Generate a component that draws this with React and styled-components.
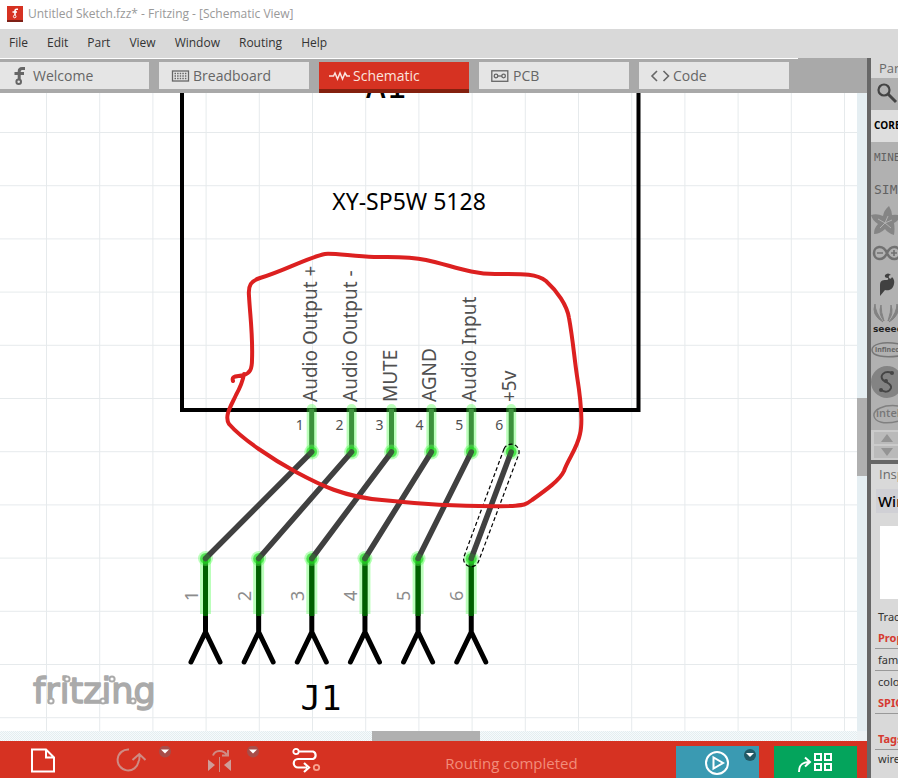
import React, { useState } from "react";
import styled, { createGlobalStyle } from "styled-components";

const GlobalStyle = createGlobalStyle`
  * {
    box-sizing: border-box;
  }
  body {
    margin: 0;
    font-family: "Noto Sans", "Open Sans", sans-serif;
    color: #333;
  }
  button {
    border: 0;
    padding: 0;
    background: none;
    font: inherit;
    color: inherit;
  }
`;

const Window = styled.div`
  display: flex;
  flex-direction: column;
  height: 100vh;
  overflow: hidden;
  background: #fff;
`;

const TitleBar = styled.header`
  flex: none;
  display: flex;
  align-items: center;
  gap: 5px;
  height: 29px;
  padding: 0 0 2px 7px;
  font-family: "Open Sans", sans-serif;
  font-size: 12px;
  color: #999;
  svg {
    display: block;
  }
`;

const MenuBar = styled.nav`
  flex: none;
  display: flex;
  gap: 19px;
  height: 29px;
  padding: 0 0 2px 9px;
  background: #d9d9d9;
  font-family: "Open Sans", sans-serif;
  font-size: 12px;
  color: #333;
`;

const Body = styled.div`
  flex: 1;
  display: flex;
  min-height: 0;
`;

const Main = styled.main`
  flex: 1;
  display: flex;
  flex-direction: column;
  min-width: 0;
`;

const TabBar = styled.div`
  flex: none;
  height: 35px;
  background: #a9a9a9;
`;

const TabLine = styled.div`
  width: 92%;
  height: 1px;
  margin-bottom: 3px;
  background: #fff;
`;

const Tabs = styled.div`
  display: flex;
  gap: 10px;
  margin-left: -1px;
`;

const Tab = styled.button`
  flex: 0 0 150px;
  display: flex;
  align-items: center;
  gap: 3px;
  height: ${(props) => (props.$active ? "31px" : "27px")};
  padding-left: 10px;
  border-bottom: ${(props) => (props.$active ? "4px solid #84200f" : "0")};
  background: ${(props) => (props.$active ? "#d63222" : "#e5e5e5")};
  color: ${(props) => (props.$active ? "#fbe3df" : "#666")};
  font-family: "Open Sans", sans-serif;
  font-size: 14px;
`;

const View = styled.div`
  flex: 1;
  display: grid;
  grid-template-columns: 1fr 10px;
  grid-template-rows: 1fr 10px;
  min-height: 0;
  background: #edf2f4;
`;

const Sheet = styled.svg`
  display: block;
  width: 100%;
  height: 100%;
  min-height: 0;
  overflow: hidden;
  background: #fff;
  font-family: "Noto Sans", sans-serif;
`;

const VerticalTrack = styled.div`
  display: grid;
  grid-template-rows: 305fr 78fr 255fr;
  background: #e5eef2;
`;

const HorizontalTrack = styled.div`
  display: grid;
  grid-template-columns: 372fr 108fr 377fr;
  background: repeating-conic-gradient(#e3eef1 0 25%, #f8fafb 0 50%) 0 0 / 2px 2px;
`;

const Thumb = styled.div`
  grid-area: ${(props) => (props.$vertical ? "2 / 1" : "1 / 2")};
  background: #b0b0b0;
`;

const Toolbar = styled.footer`
  flex: none;
  display: flex;
  align-items: flex-start;
  height: 37px;
  padding: 5px 10px 0 28px;
  background: #d63222;
  color: #fff;
`;

const Tool = styled.button`
  display: flex;
  flex: none;
  width: ${(props) => props.$width}px;
  svg {
    display: block;
  }
`;

const Status = styled.div`
  flex: 1;
  padding-top: 5px;
  padding-right: 3px;
  text-align: center;
  line-height: 24px;
  font-family: "Open Sans", sans-serif;
  font-size: 15px;
  color: #f28d7b;
`;

const Action = styled.button`
  flex: 0 0 83px;
  height: 32px;
  margin-left: ${(props) => props.$gap || 0}px;
  background: ${(props) => props.$color};
  color: #fff;
  svg {
    display: block;
  }
`;

const Dock = styled.aside`
  flex: 0 0 31px;
  display: flex;
  flex-direction: column;
  overflow: hidden;
  border-left: 4px solid #676767;
  background: #d9d9d9;
  white-space: nowrap;
`;

const DockTitle = styled.h2`
  flex: none;
  margin: 0;
  padding-left: 8px;
  line-height: 20px;
  font-family: "Open Sans", sans-serif;
  font-size: 13px;
  font-weight: 400;
  color: #6a6a6a;
`;

const Bins = styled.div`
  flex: none;
  display: flex;
  flex-direction: column;
  background: #b1b1b1;
`;

const Bin = styled.button`
  display: flex;
  align-items: center;
  height: 32px;
  padding-left: ${(props) => (props.$text ? "3px" : "0")};
  padding-bottom: ${(props) => (props.$text ? "2px" : "0")};
  background: ${(props) => (props.$active ? "#dedede" : "transparent")};
  color: ${(props) => (props.$active ? "#000" : "#626262")};
  font-family: ${(props) => props.$font || '"Open Sans", sans-serif'};
  font-size: ${(props) => props.$size || 11}px;
  font-weight: ${(props) => (props.$active ? 700 : 400)};
  svg {
    display: block;
    flex: none;
  }
`;

const BinScroll = styled.div`
  display: grid;
  gap: 2px;
  padding: 2px 0 2px 3px;
  background: #cbcbcb;
`;

const ScrollButton = styled.button`
  display: flex;
  height: 12px;
  padding-left: 4px;
  background: #bababa;
  svg {
    display: block;
    flex: none;
  }
`;

const Inspector = styled.section`
  flex: 1;
  display: flex;
  flex-direction: column;
  border-top: 4px solid #676767;
`;

const PartName = styled.div`
  margin: 5px 0 13px 5px;
  padding-left: 2px;
  background: #d0d0d5;
  line-height: 24px;
  font-size: 15px;
  font-weight: 500;
  color: #000;
`;

const Preview = styled.div`
  flex: none;
  height: 73px;
  margin: 0 0 8px 9px;
  background: #fff;
`;

const Info = styled.div`
  padding-left: 7px;
  line-height: 20px;
  font-size: 11px;
  color: #333;
`;

const Row = styled.div`
  margin-left: 4px;
  padding-left: 3px;
  border-bottom: ${(props) => (props.$line ? "1px solid #999" : "0")};
  line-height: ${(props) => props.$height || 21}px;
  font-size: 11px;
  color: #333;
`;

const Heading = styled(Row)`
  margin-top: ${(props) => props.$space || 0}px;
  font-weight: 700;
  color: #d63a30;
`;

const TabIcon = ({ children }) => (
  <svg width="21" height="20" viewBox="0 0 21 20" fill="none" stroke="currentColor" strokeWidth="1.3">
    {children}
  </svg>
);

const tabs = [
  {
    name: "Welcome",
    icon: (
      <g strokeWidth="3">
        <path d="M16 2.5H13C11 2.5 10.2 3.5 10.2 5.5V13M5.5 7.5H15" />
        <circle cx="9.7" cy="15.7" r="2.3" strokeWidth="2" />
      </g>
    ),
  },
  {
    name: "Breadboard",
    icon: (
      <g>
        <rect x="3.5" y="5" width="16" height="10" />
        <path d="M5.5 7.5h12M5.5 10h12M5.5 12.5h12" strokeDasharray="1.5 1.1" strokeWidth="1.5" />
      </g>
    ),
  },
  {
    name: "Schematic",
    icon: <path d="M0 10h4.5l1.5-3 2.5 6 2.5-6 2.5 6 2.5-6 1.8 3H21" strokeWidth="1.5" />,
  },
  {
    name: "PCB",
    icon: (
      <g>
        <rect x="2.8" y="4.8" width="16" height="10.5" />
        <circle cx="7" cy="10" r="1.8" />
        <circle cx="14.6" cy="10" r="1.8" />
        <path d="M9 10h4" />
      </g>
    ),
  },
  {
    name: "Code",
    icon: <path d="M8 5L3 10l5 5M14.5 5l5 5-5 5" strokeWidth="1.6" />,
  },
];

const GRID = 53.2;
const PIN_Y = 452;
const WIRE_Y = 558.5;

const pins = ["Audio Output +", "Audio Output -", "MUTE", "AGND", "Audio Input", "+5v"].map(
  (label, i) => ({ label, top: 311.7 + i * 39.9, bottom: 205.5 + i * 53.15 })
);

const Node = ({ x, y }) => (
  <g>
    <circle cx={x} cy={y} r="7.5" fill="#5f5" fillOpacity="0.4" />
    <circle cx={x} cy={y} r="5.5" fill="#20e020" fillOpacity="0.5" />
  </g>
);

const Connector = ({ pin, number }) => (
  <g>
    <path
      d={`M${pin.bottom} ${WIRE_Y}V632l-14.5 30M${pin.bottom} 632l14.5 30`}
      stroke="#000"
      strokeWidth="5"
      strokeLinecap="round"
      strokeLinejoin="round"
      fill="none"
    />
    <path d={`M${pin.top} 409V${PIN_Y}`} stroke="#4dff4d" strokeOpacity="0.38" strokeWidth="10" strokeLinecap="round" />
    <path d={`M${pin.top} 409V${PIN_Y}`} stroke="#3c913c" strokeWidth="5" />
    <path d={`M${pin.bottom} ${WIRE_Y}V614`} stroke="#4dff4d" strokeOpacity="0.38" strokeWidth="11" />
    <path d={`M${pin.bottom} ${WIRE_Y}V616`} stroke="#006000" strokeWidth="5" />
    <Node x={pin.top} y={PIN_Y} />
    <Node x={pin.bottom} y={WIRE_Y} />
    <path
      d={`M${pin.top} ${PIN_Y}L${pin.bottom} ${WIRE_Y}`}
      stroke="#404040"
      strokeWidth="5.5"
      strokeLinecap="round"
    />
    <circle cx={pin.top} cy={PIN_Y} r="5" fill="#18c818" fillOpacity="0.2" />
    <circle cx={pin.bottom} cy={WIRE_Y} r="5" fill="#18c818" fillOpacity="0.25" />
    <text transform={`translate(${pin.top + 5} 402) rotate(-90)`} fontSize="19" fill="#505050">
      {pin.label}
    </text>
    <text x={pin.top - 16} y="430" fontSize="14" fill="#505050">
      {number}
    </text>
    <text transform={`translate(${pin.bottom - 8} 601) rotate(-90)`} fontSize="18" fill="#8c8c8c">
      {number}
    </text>
  </g>
);

const Wordmark = () => (
  <g stroke="#aaa" strokeWidth="1.5" strokeLinejoin="round" fill="#aaa">
    <text x="33" y="703" fontFamily="DejaVu Sans" fontSize="35">
      fritzing
    </text>
    <g fill="#fff" strokeWidth="2">
      <circle cx="51" cy="701" r="2.6" />
      <circle cx="67" cy="679" r="2.6" />
      <circle cx="103" cy="701" r="2.6" />
      <circle cx="112" cy="679" r="2.6" />
      <circle cx="133" cy="701" r="2.6" />
    </g>
  </g>
);

const Schematic = () => (
  <Sheet role="img" aria-label="Schematic">
    <defs>
      <pattern id="grid" x="46" y="132" width={GRID} height={GRID} patternUnits="userSpaceOnUse">
        <path d={`M0.5 0V${GRID}M0 0.5H${GRID}`} stroke="#e6eaec" strokeWidth="1" />
      </pattern>
    </defs>
    {/* drawing coordinates start below the tab bar */}
    <g transform="translate(0 -93)">
      <rect y="93" width="100%" height="100%" fill="url(#grid)" />
      <path d="M182 60V410H638.5V60" fill="none" stroke="#000" strokeWidth="4" />
      <text x="386" y="98" fontFamily="DejaVu Sans Mono" fontSize="34" textAnchor="middle">
        A1
      </text>
      <text x="409" y="210" fontSize="23" textAnchor="middle">
        XY-SP5W 5128
      </text>
      {pins.map((pin, i) => (
        <Connector key={pin.label} pin={pin} number={i + 1} />
      ))}
      <path
        d="M504 449A7.5 7.5 0 0 1 518.5 455L478.5 561.5A7.5 7.5 0 0 1 464 556.5Z"
        fill="none"
        stroke="#000"
        strokeWidth="1.2"
        strokeDasharray="4 2.5"
      />
      <text x="321" y="710" fontFamily="DejaVu Sans Mono" fontSize="34" textAnchor="middle">
        J1
      </text>
      <path
        d="M233 381C231 375 238 377 244 375C250 373 252 369 252 360C253 335 250 315 249 296C248 285 251 281 260 278C284 271 309 257 325 254C332 253 352 256 374 257C392 257 408 256 426 260C450 265 470 274 495 274C520 274 536 273 546 281C557 291 567 305 569 318C573 340 574 356 577 376C581 401 583 422 580 434C577 449 568 459 564 471C560 480 546 490 532 500C524 506 523 505 510 506C465 507 420 504 382 500C344 497 320 485 296 472C272 459 242 439 229 424C224 416 231 406 236 395C241 386 243 380 244 374"
        fill="none"
        stroke="#dc2020"
        strokeWidth="4"
        strokeLinecap="round"
      />
      <Wordmark />
    </g>
  </Sheet>
);

const DropArrow = ({ x, y, color }) => (
  <g stroke="none">
    <circle cx={x} cy={y} r="6" fill={color} />
    <path d={`M${x - 4} ${y - 2}h8l-4 4z`} fill="#fff" />
  </g>
);

const Tools = () => (
  <>
    <Tool $width={88} aria-label="New sketch">
      <svg width="88" height="28" fill="none" stroke="#fff" strokeWidth="2">
        <path d="M4 3.500H18L26 11.500V25.500H4ZM18 3.500V11.500H26" />
      </svg>
    </Tool>
    <Tool $width={88} aria-label="Rotate">
      <svg width="88" height="28" fill="none" stroke="#cf8b84" strokeWidth="2">
        <path d="M13 3.500A10.500 10.500 0 1 0 22.500 15.500C24 13.500 23.500 11 23.300 8.500M16.500 14L23.300 8L29.500 14" />
        <DropArrow x={49} y={5.5} color="#a84d49" />
      </svg>
    </Tool>
    <Tool $width={88} aria-label="Flip">
      <svg width="88" height="28" fill="none" stroke="#cf8b84" strokeWidth="2">
        <path d="M9 9.500C11 4 19 3 23 9M24 4V9.500H18" />
        <path d="M15.500 11V26" strokeWidth="1" />
        <path d="M4 13.500L11 19L4 25ZM27 13.500L20 19L27 25Z" fill="#cf9d98" stroke="none" />
        <DropArrow x={49} y={5.5} color="#a84d49" />
      </svg>
    </Tool>
    <Tool $width={58} aria-label="Autoroute">
      <svg width="58" height="28" fill="none" stroke="#fff" strokeWidth="2.200">
        <circle cx="4" cy="5.500" r="2.700" strokeWidth="1.800" />
        <path d="M7 5.500H21A4 4 0 0 1 21 13H6A4 4 0 0 0 6 21.500H15M12 17L17 21.500L12 26" />
        <circle cx="24.500" cy="21.500" r="2.700" stroke="#f8a28f" strokeWidth="1.800" />
      </svg>
    </Tool>
  </>
);

const iconBins = [
  {
    name: "Adafruit",
    icon: (
      <path
        d="M18 0Q21 5 21 9Q26 8 30 10Q27 15 23 17Q24 23 23 29Q17 27 14 23Q9 28 3 28Q3 22 7 18Q1 14 0 9Q6 7 12 10Q13 4 18 0Z"
        fill="#858585"
      />
    ),
    detail: <path d="M14 17L17 10M14 17L21 14M14 17L20 22M14 17L9 22M14 17L7 13" stroke="#b1b1b1" strokeWidth="1" />,
  },
  {
    name: "Arduino",
    icon: (
      <g fill="none" stroke="#717171" strokeWidth="2.500">
        <path d="M16 15C12 6 3 8 3 15S12 24 16 15C20 6 29 8 29 15S20 24 16 15" />
        <path d="M6 15h6M20 15h6M23 12v6" strokeWidth="1.600" />
      </g>
    ),
  },
  {
    name: "SparkFun",
    icon: (
      <path
        d="M9 26V15C9 11 11 10 15 10Q18 10 17 8Q13 8 14 5Q17 2 20 5Q17 5 18 8Q20 10 21 7Q24 10 23 14C22 20 17 21 14 20Z"
        fill="#414141"
      />
    ),
  },
  {
    name: "Seeed",
    icon: (
      <g>
        <path d="M4 2Q0 13 12 20Q4 10 4 2ZM10 3Q7 12 13 19Q10 10 10 3ZM26 2Q30 13 18 20Q26 10 26 2ZM20 3Q23 12 17 19Q20 10 20 3Z" fill="#828282" stroke="#828282" />
        <text x="2" y="30" fontSize="9" fontWeight="700" fontFamily="DejaVu Sans" fill="#222">
          seeed
        </text>
      </g>
    ),
  },
  {
    name: "Infineon",
    icon: (
      <g>
        <path d="M28 10C12 7 1 10 1 16S13 24 28 22" fill="none" stroke="#777" strokeWidth="1.500" />
        <text x="4" y="18" fontSize="7" fontWeight="700" fontFamily="Open Sans" fill="#666">
          infineon
        </text>
      </g>
    ),
  },
  {
    name: "Snootlab",
    icon: (
      <g>
        <circle cx="16" cy="16" r="16" fill="#838383" />
        <path d="M21 7C13 4 8 10 12 14C15 17 21 17 20 22C18 27 13 26 10 24" fill="none" stroke="#454545" strokeWidth="2" />
        <circle cx="21" cy="7" r="2" fill="#454545" />
        <circle cx="15" cy="15" r="2" fill="#454545" />
        <circle cx="10" cy="24" r="2" fill="#454545" />
      </g>
    ),
  },
  {
    name: "Intel",
    icon: (
      <g>
        <path d="M28 8C12 6 2 12 3 18S13 27 28 23" fill="none" stroke="#808080" strokeWidth="1.500" />
        <text x="5" y="19" fontSize="11" fontWeight="600" fontFamily="Open Sans" fill="#777">
          intel
        </text>
      </g>
    ),
  },
];

const Parts = () => (
  <>
    <DockTitle>Parts</DockTitle>
    <Bins>
      <Bin aria-label="Search parts">
        <svg width="32" height="32" fill="none" stroke="#444">
          <circle cx="13" cy="12" r="5.500" strokeWidth="2.200" />
          <path d="M17 16L25 24" strokeWidth="3" />
        </svg>
      </Bin>
      <Bin $text $active $size={10}>
        CORE
      </Bin>
      <Bin $text $font='"DejaVu Sans Mono", monospace'>
        MINE
      </Bin>
      <Bin $text $font='"DejaVu Sans Mono", monospace' $size={13}>
        SIM
      </Bin>
      {iconBins.map((bin) => (
        <Bin key={bin.name} aria-label={bin.name}>
          <svg width="32" height="32">
            {bin.icon}
            {bin.detail}
          </svg>
        </Bin>
      ))}
      <BinScroll>
        <ScrollButton aria-label="Scroll up">
          <svg width="18" height="12">
            <path d="M3 10L9 2L15 10Z" fill="#949494" />
          </svg>
        </ScrollButton>
        <ScrollButton aria-label="Scroll down">
          <svg width="18" height="12">
            <path d="M3 2L9 10L15 2Z" fill="#949494" />
          </svg>
        </ScrollButton>
      </BinScroll>
    </Bins>
  </>
);

const App = () => {
  const [active, setActive] = useState("Schematic");

  return (
    <Window>
      <GlobalStyle />
      <TitleBar>
        <svg width="16" height="16" viewBox="0 0 16 16">
          <rect width="16" height="16" fill="#d63222" />
          <rect y="14" width="16" height="2" fill="#7e2016" />
          <path d="M11 3.200H9.500Q8 3.200 8 5V9M5.500 6H10" fill="none" stroke="#fff" strokeWidth="1.600" />
          <circle cx="7.700" cy="10.500" r="1.300" fill="none" stroke="#fff" />
        </svg>
        <span>Untitled Sketch.fzz* - Fritzing - [Schematic View]</span>
      </TitleBar>
      <MenuBar>
        {["File", "Edit", "Part", "View", "Window", "Routing", "Help"].map((item) => (
          <button key={item}>{item}</button>
        ))}
      </MenuBar>
      <Body>
        <Main>
          <TabBar>
            <TabLine />
            <Tabs>
              {tabs.map(({ name, icon }) => (
                <Tab key={name} $active={name === active} onClick={() => setActive(name)}>
                  <TabIcon>{icon}</TabIcon>
                  {name}
                </Tab>
              ))}
            </Tabs>
          </TabBar>
          <View>
            <Schematic />
            <VerticalTrack>
              <Thumb $vertical />
            </VerticalTrack>
            <HorizontalTrack>
              <Thumb />
            </HorizontalTrack>
          </View>
          <Toolbar>
            <Tools />
            <Status>Routing completed</Status>
            <Action $color="#3a9ab2" aria-label="Simulate">
              <svg width="83" height="32" fill="none" stroke="#fff" strokeWidth="2">
                <circle cx="41" cy="17" r="11" />
                <path d="M37.500 11.500V22.500L47 17Z" />
                <DropArrow x={74} y={9} color="#215a66" />
              </svg>
            </Action>
            <Action $color="#04a45c" $gap={15} aria-label="Share">
              <svg width="83" height="32" fill="none" stroke="#fff" strokeWidth="2">
                <path d="M25 26C25 19 28 16 36 16M31 11.500L36 16L31 20.500" />
                <path d="M41 8h6v6h-6ZM51 8h6v6h-6ZM41 18h6v6h-6ZM51 18h6v6h-6Z" />
              </svg>
            </Action>
          </Toolbar>
        </Main>
        <Dock>
          <Parts />
          <Inspector>
            <DockTitle>Inspector</DockTitle>
            <PartName>Wire</PartName>
            <Preview />
            <Info>Trace</Info>
            <Heading $line>Properties</Heading>
            <Row $line>family</Row>
            <Row>color</Row>
            <Heading $line>SPICE</Heading>
            <Heading $line $space={14}>
              Tags
            </Heading>
            <Row $height={18}>wire</Row>
          </Inspector>
        </Dock>
      </Body>
    </Window>
  );
};

export default App;
